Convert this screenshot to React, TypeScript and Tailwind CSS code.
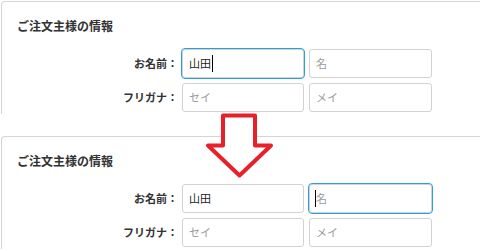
import type React from "react"

const font = { fontFamily: '"Noto Sans CJK JP", "Noto Sans", sans-serif' }

function Caret() {
  return <span className="inline-block h-[17px] w-px bg-black align-middle" />
}

interface FieldProps {
  value?: string
  placeholder?: string
  focused?: boolean
  caretBefore?: boolean
  wide?: boolean
}

function Field({ value, placeholder, focused, caretBefore, wide }: FieldProps) {
  return (
    <div
      className={`flex h-[29px] items-center rounded-[3px] border border-[#d2d2d2] bg-white px-[6px] text-[11px] ${
        wide ? "w-[123px]" : "w-[122px]"
      } ${focused ? "outline outline-1 outline-[#2a9fde]" : ""}`}
    >
      {caretBefore && (
        <span className="-ml-[1px] inline-flex">
          <Caret />
        </span>
      )}
      {value ? (
        <span className="text-[#222]">{value}</span>
      ) : (
        <span className="text-[#9a9a9a]">{placeholder}</span>
      )}
      {focused && !caretBefore && (
        <span className="ml-px inline-flex">
          <Caret />
        </span>
      )}
    </div>
  )
}

function Row({ label, children }: { label: string; children: React.ReactNode }) {
  return (
    <div className="flex items-center">
      <div className="w-[161px] text-right text-[11px] font-bold text-[#333]">{label}</div>
      <div className="ml-[4px] flex gap-[5px]">{children}</div>
    </div>
  )
}

function Panel({ firstFocused }: { firstFocused: boolean }) {
  return (
    <div className="ml-px h-[113px] w-[482px] rounded-tl-[4px] border-l border-t border-[#d4d4d4] pl-[15px] pt-[15px]">
      <div className="text-[12px] font-bold leading-[18px] text-[#333]">ご注文主様の情報</div>
      <div className="mt-[14px] flex flex-col gap-[5px]">
        <Row label="お名前：">
          <Field value="山田" focused={firstFocused} />
          <Field placeholder="名" wide focused={!firstFocused} caretBefore={!firstFocused} />
        </Row>
        <Row label="フリガナ：">
          <Field placeholder="セイ" />
          <Field placeholder="メイ" wide />
        </Row>
      </div>
    </div>
  )
}

export default function App() {
  return (
    <div className="relative h-[250px] w-[480px] overflow-hidden bg-white pt-px" style={font}>
      <Panel firstFocused={true} />
      <div className="mt-[22px]">
        <Panel firstFocused={false} />
      </div>

      {/* red down arrow between the two states */}
      <svg className="pointer-events-none absolute left-0 top-0" width="480" height="250" viewBox="0 0 480 250">
        <path
          d="M223 115.5 H255 V145.5 H271 L239.5 175.5 L208 145.5 H223 Z"
          fill="white"
          stroke="#e8202a"
          strokeWidth="4"
          strokeLinejoin="round"
        />
      </svg>
    </div>
  )
}
